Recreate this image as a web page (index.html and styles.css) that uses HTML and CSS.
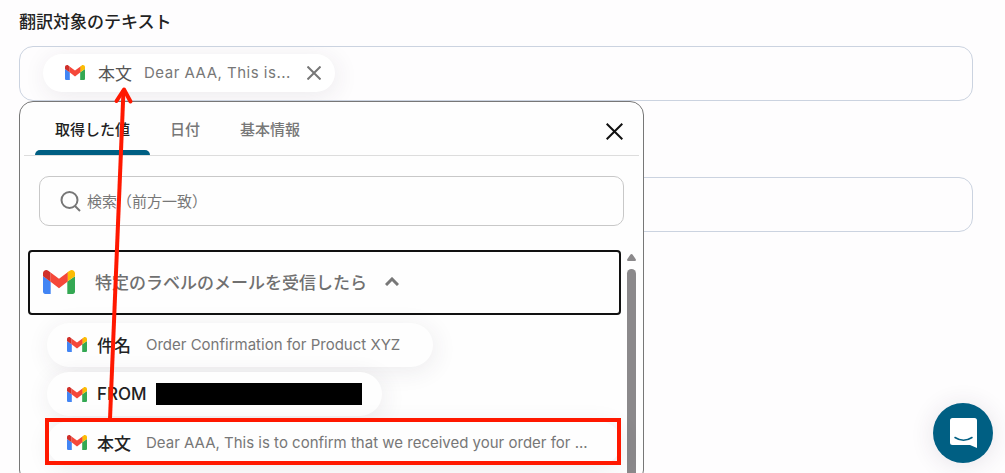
FILE: index.html
```html
<!DOCTYPE html>
<html lang="ja">
<head>
    <meta charset="UTF-8">
    <meta name="viewport" content="width=device-width, initial-scale=1.0">
    <title>翻訳対象のテキスト</title>
    <link rel="stylesheet" href="styles.css">
</head>
<body>
    <svg class="defs" aria-hidden="true">
        <symbol id="gmail" viewBox="0 0 32 24">
            <path fill="#4285f4" d="M2.200 24H7.700V11.600L0 6.200V21.800C0 23 1 24 2.200 24z"/>
            <path fill="#34a853" d="M24.300 24H29.800C31 24 32 23 32 21.800V6.200L24.300 11.600z"/>
            <path fill="#fbbc04" d="M24.300 2.200V11.600L32 6.200V3.300C32 .6 28.900-1 26.700 .7z"/>
            <path fill="#f5483a" d="M7.300 11.600V2.200L16 8.700L24.700 2.200V11.600L16 18.200z"/>
            <path fill="#d0302a" d="M0 3.300V6.200L7.300 11.600V2.200L5.300 .7C3.100-1 0 .6 0 3.300z"/>
        </symbol>
    </svg>

    <main class="form">
        <h2 class="form-label">翻訳対象のテキスト</h2>
        <div class="form-row">
            <div class="field">
                <span class="chip">
                    <svg class="chip-icon"><use href="#gmail"/></svg>
                    <span class="chip-name">本文</span>
                    <span class="chip-value">Dear AAA, This is...</span>
                    <button type="button" class="chip-remove" aria-label="削除">
                        <svg width="14" height="14" viewBox="0 0 14 14"><path d="M.5.5l13 13M13.500.5l-13 13"/></svg>
                    </button>
                </span>
            </div>

            <section class="popup">
                <div class="popup-header">
                    <div class="tabs">
                        <button type="button" class="tab active">取得した値</button>
                        <button type="button" class="tab">日付</button>
                        <button type="button" class="tab">基本情報</button>
                    </div>
                    <button type="button" class="close" aria-label="閉じる">
                        <svg width="17" height="17" viewBox="0 0 17 17"><path d="M.7.7l15.600 15.600M16.300.7l-15.600 15.600"/></svg>
                    </button>
                </div>

                <label class="search">
                    <svg width="21" height="21" viewBox="0 0 21 21"><circle cx="9.500" cy="9" r="8"/><path d="M15 15l5 5"/></svg>
                    <input type="text" aria-label="検索" placeholder="検索（前方一致）">
                </label>

                <div class="scroll">
                    <div class="list">
                        <button type="button" class="group">
                            <svg class="group-icon"><use href="#gmail"/></svg>
                            <span>特定のラベルのメールを受信したら</span>
                            <svg class="chevron" width="14" height="9" viewBox="0 0 14 9"><path d="M1 8l6-6 6 6"/></svg>
                        </button>
                        <ul class="items">
                            <li><button type="button" class="item">
                                <svg class="chip-icon"><use href="#gmail"/></svg>
                                <span class="item-name">件名</span>
                                <span class="item-value">Order Confirmation for Product XYZ</span>
                            </button></li>
                            <li><button type="button" class="item masked">
                                <svg class="chip-icon"><use href="#gmail"/></svg>
                                <span class="item-name">FROM</span>
                                <span class="mask"></span>
                            </button></li>
                            <li class="marked"><button type="button" class="item">
                                <svg class="chip-icon"><use href="#gmail"/></svg>
                                <span class="item-name">本文</span>
                                <span class="item-value">Dear AAA, This is to confirm that we received your order for ...</span>
                            </button></li>
                        </ul>
                    </div>
                    <div class="scrollbar">
                        <svg width="9" height="7" viewBox="0 0 9 7"><path d="M4.500 0q.7 0 1.200.8L8.800 5.300Q9.300 7 8 7H1Q-.3 7 .2 5.300L3.300.8Q3.800 0 4.500 0z"/></svg>
                        <div class="thumb"></div>
                    </div>
                </div>
            </section>
        </div>
        <div class="field"></div>
    </main>

    <svg class="arrow" width="26" height="334" viewBox="0 0 26 334" aria-hidden="true">
        <path d="M5 333L18.500 4"/>
        <path class="arrow-head" d="M11.500 15L19 3.500L25.500 15.500"/>
    </svg>

    <button type="button" class="chat" aria-label="チャット">
        <svg width="27" height="30" viewBox="0 0 27 30">
            <path fill="#fff" d="M2.500 0H24.500Q27 0 27 2.500V30L20 27H2.500Q0 27 0 24.500V2.500Q0 0 2.500 0z"/>
            <path fill="none" stroke="#005f83" stroke-width="1.500" stroke-linecap="round" d="M5 19.500Q13.500 25 22 19.500"/>
        </svg>
    </button>
</body>
</html>
```
FILE: styles.css
```css
* {
    box-sizing: border-box;
}
html, body {
    height: 100%;
}
body {
    font-family: Inter, "Noto Sans CJK JP", sans-serif;
    font-size: 15px;
    color: #222;
    background-color: #fefdfe;
    margin: 0;
    overflow: hidden;
    position: relative;
}
button {
    font: inherit;
    color: inherit;
    background: none;
    border: 0;
    margin: 0;
    padding: 0;
    cursor: pointer;
}
svg {
    display: block;
    flex: none;
}
.defs {
    position: absolute;
    width: 0;
    height: 0;
}

.form {
    padding: 9px 32px 0 19px;
}
.form-label {
    font-size: 17px;
    font-weight: 500;
    line-height: 26px;
    margin: 0 0 11px;
}
.form-row {
    position: relative;
    margin-bottom: 76px;
}
.field {
    height: 55px;
    padding: 0 23px 2px;
    display: flex;
    align-items: center;
    border: 1px solid #cbd3e0;
    border-radius: 14px;
    overflow: hidden;
}

.chip {
    display: flex;
    align-items: center;
    height: 38px;
    padding: 0 14px 0 22px;
    border-radius: 19px;
    background-color: #fff;
    box-shadow: 2px 4px 24px rgba(60, 40, 70, 0.09);
}
.chip-icon {
    width: 20px;
    height: 15px;
}
.chip-name {
    font-size: 17px;
    margin: 0 12px 0 13px;
    color: #555;
}
.chip-value {
    color: #777;
    letter-spacing: 0.5px;
}
.chip-remove {
    margin-left: 16px;
}
.chip-remove path {
    stroke: #777;
    stroke-width: 2;
}

.popup {
    position: absolute;
    z-index: 1;
    top: 55px;
    left: 0;
    width: 625px;
    max-width: 100%;
    height: calc(100vh - 90px);
    display: flex;
    flex-direction: column;
    border: 1px solid #777;
    border-radius: 14px;
    background-color: #fefefe;
    overflow: hidden;
}
.popup-header {
    display: flex;
    justify-content: space-between;
    align-items: center;
    height: 54px;
    margin: 0 4px;
    padding: 0 16px 0 11px;
    border-bottom: 1px solid #ddd;
}
.tabs {
    display: flex;
    align-self: stretch;
}
.tab {
    padding: 0 20px;
    font-weight: 500;
    color: #777;
    position: relative;
}
.tab.active {
    color: #222;
}
.tab.active::after {
    content: "";
    position: absolute;
    left: 0;
    right: 0;
    bottom: 0;
    height: 5px;
    border-radius: 5px 5px 0 0;
    background-color: #005f83;
}
.close {
    margin-top: 6px;
}
.close path {
    stroke: #111;
    stroke-width: 2;
}

.search {
    display: flex;
    align-items: center;
    gap: 6px;
    height: 50px;
    flex: none;
    margin: 20px 19px 24px;
    padding: 0 20px;
    border: 1px solid #c8c8c8;
    border-radius: 10px;
}
.search svg {
    fill: none;
    stroke: #777;
    stroke-width: 2;
}
.search input {
    flex: 1;
    min-width: 0;
    padding: 0;
    border: 0;
    outline: 0;
    background: none;
    font: inherit;
}
.search input::placeholder {
    color: #777;
    opacity: 1;
}

.scroll {
    flex: 1;
    min-height: 0;
    display: flex;
    gap: 6px;
    padding: 0 7px 0 8px;
    overflow: hidden;
}
.list {
    flex: 1;
    min-width: 0;
}
.group {
    display: flex;
    align-items: center;
    width: 100%;
    height: 65px;
    padding: 0 13px 2px;
    border: 2px solid #111;
    border-radius: 4px;
    font-size: 17px;
    font-weight: 500;
    color: #707070;
}
.group-icon {
    width: 32px;
    height: 24px;
    margin-right: 20px;
}
.chevron {
    margin-left: 18px;
    fill: none;
    stroke: #777;
    stroke-width: 3;
}
.items {
    list-style: none;
    margin: 0;
    padding: 8px 0 0 19px;
    display: flex;
    flex-direction: column;
    gap: 5px;
}
.item {
    display: flex;
    align-items: center;
    height: 44px;
    padding: 0 33px 2px 20px;
    border-radius: 22px;
    background-color: #fefefe;
    box-shadow: 2px 4px 24px rgba(60, 40, 70, 0.09);
    white-space: nowrap;
}
.item.masked {
    padding: 0 20px 0 20px;
}
.item-name {
    font-size: 17px;
    font-weight: 500;
    margin-left: 10px;
}
.item-value {
    margin-left: 15px;
    color: #777;
}
.mask {
    width: 206px;
    height: 22px;
    margin-left: 9px;
    background-color: #000;
}
.marked {
    position: relative;
}
.marked::after {
    content: "";
    position: absolute;
    top: -3px;
    bottom: 0;
    left: -2px;
    right: 0;
    border: 4px solid #ff1800;
}

.scrollbar {
    width: 9px;
    display: flex;
    flex-direction: column;
    gap: 8px;
    padding-top: 4px;
}
.scrollbar svg {
    fill: #8b898b;
}
.thumb {
    flex: 1;
    border-radius: 5px 5px 0 0;
    background-color: #8b898b;
}

.arrow {
    position: absolute;
    z-index: 2;
    top: 86px;
    left: 105px;
    overflow: visible;
    fill: none;
    stroke: #ff1800;
    stroke-width: 4;
    pointer-events: none;
}
.arrow-head {
    stroke-linecap: round;
    stroke-linejoin: round;
}

.chat {
    position: absolute;
    right: 12px;
    bottom: 10px;
    width: 60px;
    height: 60px;
    display: flex;
    align-items: center;
    justify-content: center;
    border-radius: 50%;
    background-color: #005f83;
    box-shadow: 0 2px 24px rgba(60, 40, 70, 0.12);
}
```
